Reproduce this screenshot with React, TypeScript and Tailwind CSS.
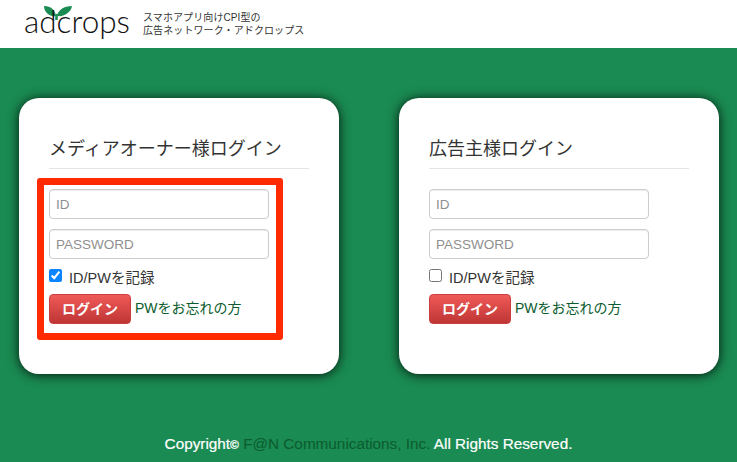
const fontStack = 'font-["Liberation_Sans","Noto_Sans_CJK_JP",sans-serif]'

function Logo() {
  return (
    <svg width="108" height="36" viewBox="0 0 108 36" className="block overflow-visible">
      <path d="M32 10 C31 4 27 0 20 0 C20 6 25 11 32 10 Z M33 10 C34 4 40 0 48 0 C47 6 41 11 33 10 Z" fill="#1a8b52" />
      <path d="M32.5 8 L32.5 14" stroke="#1a8b52" strokeWidth="2.5" fill="none" />
      <text x="0" y="27" fontFamily="Lato, sans-serif" fontWeight="300" fontSize="32" fill="#111" textLength="106" lengthAdjust="spacingAndGlyphs">
        adcrops
      </text>
    </svg>
  )
}

function TextField({ placeholder }: { placeholder: string }) {
  return (
    <input
      readOnly
      placeholder={placeholder}
      className="h-[30px] w-[220px] rounded-[4px] border border-[#cccccc] bg-white px-[6px] text-[13.5px] shadow-[inset_0_1px_1px_rgba(0,0,0,0.075)] outline-none placeholder:text-[#8f8f8f]"
    />
  )
}

function LoginCard({ title, checked }: { title: string; checked?: boolean }) {
  return (
    <section className="h-[276px] w-[320px] rounded-[20px] bg-white px-[30px] pt-[39px] shadow-[0_1px_12px_rgba(0,0,0,0.85)]">
      <h2 className="border-b border-[#e5e5e5] pb-[7px] text-[18px] leading-[24px] font-normal text-[#333333]">{title}</h2>
      <form className="mt-[20px] flex flex-col">
        <TextField placeholder="ID" />
        <div className="mt-[10px]">
          <TextField placeholder="PASSWORD" />
        </div>
        <label className="mt-[10px] flex h-[20px] items-start text-[14.5px] leading-[20px] text-[#333333]">
          <input type="checkbox" readOnly checked={!!checked} className="mt-0 mr-[7px] size-[13px] accent-[#0a84ff]" />
          <span className="-mt-px">ID/PWを記録</span>
        </label>
        <div className="mt-[5px] flex items-center">
          <button
            type="button"
            className="h-[30px] w-[82px] rounded-[4px] border border-[#c9403f] bg-gradient-to-b from-[#ef5a58] to-[#bf3535] text-[14px] font-bold text-white"
          >
            ログイン
          </button>
          <a className="ml-[4px] -mt-px text-[14px] text-[#0a5c2e]">PWをお忘れの方</a>
        </div>
      </form>
    </section>
  )
}

export default function App() {
  return (
    <div className={`relative flex h-[462px] w-[737px] flex-col overflow-hidden bg-[#1a8b52] ${fontStack}`}>
      <header className="flex h-[48px] items-center bg-white pl-[24px]">
        <Logo />
        <p className="ml-[11px] text-[10px] leading-[13px] tracking-[0.1px] text-[#333333]">
          スマホアプリ向けCPI型の
          <br />
          広告ネットワーク・アドクロップス
        </p>
      </header>
      <main className="flex gap-[60px] pt-[50px] pl-[19px]">
        <LoginCard title="メディアオーナー様ログイン" checked />
        <LoginCard title="広告主様ログイン" />
      </main>
      <footer className="mt-[60px] text-center text-[15.3px] leading-[20px] text-white [-webkit-text-stroke:0.2px_white]">
        Copyright<span className="text-[12px] font-bold">©</span> <span className="text-[#0b5c2e] [-webkit-text-stroke:0]">F@N Communications, Inc.</span> All Rights Reserved.
      </footer>
      <div className="absolute top-[178px] left-[37px] h-[162px] w-[246px] rounded-[3px] border-[7px] border-[#ff2a00]" />
    </div>
  )
}
